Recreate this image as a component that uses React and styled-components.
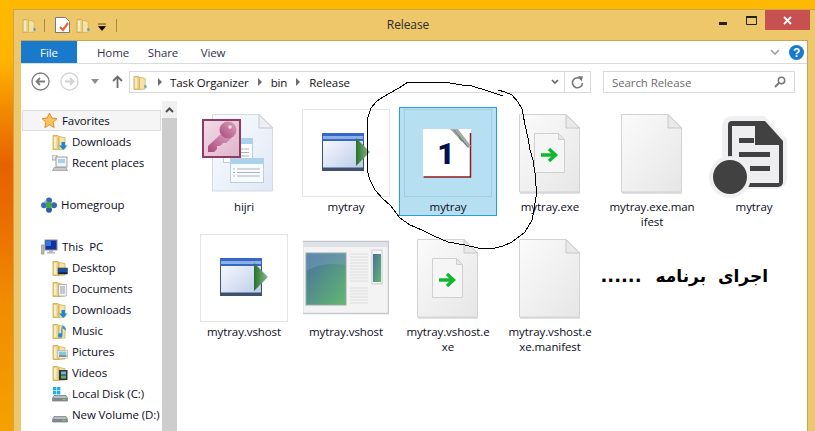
import React from "react";
import styled, { createGlobalStyle } from "styled-components";

const GlobalStyle = createGlobalStyle`
  html, body {
    margin: 0;
    width: 815px;
    height: 431px;
    overflow: hidden;
    font-family: "Open Sans", "Noto Sans", sans-serif;
    font-size: 11.5px;
    letter-spacing: -0.1px;
    color: #000;
  }
  * { box-sizing: border-box; }
  svg { display: block; flex: none; }
`;

const Desktop = styled.div`
  position: relative;
  width: 815px;
  height: 431px;
  overflow: hidden;
  padding: 9px 0 0 13px;
  background: linear-gradient(180deg, #ffb900 0, #ffb400 60px, #f28a00 110px, #e76200 165px, #ea6c00 215px, #f08c00 300px, #f5a100 431px);
`;

const Window = styled.div`
  width: 805px;
  height: 440px;
  background: #eec76a;
  border: 1px solid #c9a452;
  border-bottom: 0;
  padding: 0 7px;
  display: flex;
  flex-direction: column;
`;

const TitleBar = styled.div`
  height: 30px;
  display: grid;
  grid-template-columns: 337px 100px 1fr;
  align-items: start;
`;

const QuickAccess = styled.div`
  display: flex;
  align-items: center;
  height: 30px;
  padding-left: 1px;
`;

const QuickSep = styled.span`
  width: 1px;
  height: 13px;
  background: #a88b4a;
  margin: 0 ${(p) => p.$right}px 0 ${(p) => p.$left}px;
`;

const QuickDoc = styled.svg`
  margin-right: 6px;
`;

const Title = styled.div`
  font-size: 12px;
  line-height: 30px;
  text-align: center;
  color: #2b2b2b;
`;

const Controls = styled.div`
  display: flex;
  justify-content: flex-end;
`;

const ControlButton = styled.div`
  width: ${(p) => p.$width}px;
  height: 20px;
  display: flex;
  align-items: center;
  justify-content: center;
  background: ${(p) => p.$bg || "transparent"};
`;

const Surface = styled.div`
  flex: 1;
  min-height: 0;
  width: 787px;
  background: #fff;
  border-top: 1px solid #c9a452;
  border-right: 1px solid #c9a452;
  display: flex;
  flex-direction: column;
`;

const Ribbon = styled.div`
  height: 23px;
  display: flex;
  align-items: stretch;
  border-bottom: 1px solid #dadbdc;
`;

const RibbonTab = styled.div`
  width: ${(p) => p.$width}px;
  display: flex;
  align-items: center;
  justify-content: center;
  color: ${(p) => (p.$file ? "#fff" : "#33334a")};
  background: ${(p) => (p.$file ? "#1979ca" : "transparent")};
`;

const RibbonRight = styled.div`
  margin-left: auto;
  display: flex;
  align-items: center;
  gap: 9px;
  padding-right: 3px;
`;

const AddressRow = styled.div`
  height: 36px;
  display: flex;
  align-items: flex-start;
  padding-top: 7px;
`;

const NavButtons = styled.div`
  width: 108px;
  height: 21px;
  display: flex;
  align-items: center;
  padding-left: 10px;
`;

const NavGlyph = styled.svg`
  margin-left: ${(p) => p.$left || 0}px;
`;

const AddressBox = styled.div`
  width: 462px;
  height: 22px;
  border: 1px solid #d9d9d9;
  display: flex;
  align-items: center;
`;

const Crumbs = styled.div`
  flex: 1;
  display: flex;
  align-items: center;
  padding-left: 3px;
  color: #111;
`;

const CrumbArrow = styled.span`
  width: 0;
  height: 0;
  margin: 0 ${(p) => p.$right || 9}px 0 ${(p) => p.$left || 9}px;
  border-left: 4px solid #6d6d6d;
  border-top: 4px solid transparent;
  border-bottom: 4px solid transparent;
`;

const AddressAction = styled.div`
  width: ${(p) => p.$width}px;
  height: 100%;
  display: flex;
  align-items: center;
  justify-content: center;
  border-left: ${(p) => (p.$line ? "1px solid #d9d9d9" : "0")};
`;

const SearchBox = styled.div`
  width: 192px;
  height: 22px;
  margin-left: 12px;
  border: 1px solid #d9d9d9;
  display: flex;
  align-items: center;
  justify-content: space-between;
  padding: 0 8px;
  color: #6d6d6d;
`;

const Main = styled.div`
  flex: 1;
  min-height: 0;
  display: flex;
`;

const Sidebar = styled.nav`
  width: 141px;
  flex: none;
  padding-top: 10px;
  overflow: hidden;
`;

const NavRow = styled.div`
  height: 21px;
  margin: ${(p) => (p.$gapTop ? "21px" : "0")} 0 0 1px;
  width: 139px;
  display: flex;
  align-items: center;
  gap: 4px;
  padding-left: ${(p) => (p.$child ? 30 : 19)}px;
  white-space: pre;
  color: #0c0c22;
  background: ${(p) => (p.$active ? "#f5f5f5" : "transparent")};
  outline: ${(p) => (p.$active ? "1px solid #dedede" : "none")};
  outline-offset: -1px;
`;

const Scrollbar = styled.div`
  width: 15px;
  flex: none;
  margin-top: 1px;
  display: flex;
  flex-direction: column;
  background: #cdcdcd;
`;

const ScrollUp = styled.div`
  height: 17px;
  background: #f0f0f0;
  display: flex;
  align-items: center;
  justify-content: center;
`;

const FileGrid = styled.div`
  flex: 1;
  display: grid;
  grid-template-columns: repeat(6, 98px);
  grid-auto-rows: 125px;
  column-gap: 4px;
  align-content: start;
  align-items: start;
  padding: 7px 0 0 18px;
`;

const FileItem = styled.div`
  width: 98px;
  padding: 1px 4px 1px;
  border: 1px solid ${(p) => (p.$selected ? "#26a0da" : "transparent")};
  background: ${(p) => (p.$selected ? "#b7dff2" : "transparent")};
  display: flex;
  flex-direction: column;
  align-items: center;
`;

const Thumb = styled.div`
  width: 88px;
  height: 88px;
  border: 1px solid ${(p) => (p.$selected ? "#a3cde0" : p.$framed ? "#e4e4e4" : "transparent")};
  display: flex;
  align-items: center;
  justify-content: center;
`;

const FileName = styled.div`
  width: 86px;
  margin-top: 2px;
  line-height: 15px;
  text-align: center;
  word-break: break-all;
  color: #0b0b24;
`;

const Note = styled.div`
  grid-column: 5 / 7;
  direction: rtl;
  padding: 32px 35px 0 0;
  font-family: "DejaVu Sans", sans-serif;
  font-weight: 700;
  font-size: 17px;
  letter-spacing: 0;
  line-height: 24px;
  word-spacing: 6px;
  white-space: nowrap;
  color: #000;
`;

const NoteDots = styled.span`
  margin-right: 2px;
  font-size: 18px;
`;

const Annotation = styled.svg`
  position: absolute;
  left: 0;
  top: 0;
  pointer-events: none;
`;

/* ---------- small icons ---------- */

const FolderIcon = ({ children, size = 16 }) => (
  <svg width={size} height={size} viewBox="0 0 16 16">
    <path d="M1 1.5h5l1 1v13H1z" fill="#e9cf7f" stroke="#c9a850" strokeWidth=".8" />
    <path d="M7 2.5l6 1.2V15l-6 .5z" fill="#f6e3a3" stroke="#cfae58" strokeWidth=".8" />
    <rect x="2" y="3" width="2.5" height="11" fill="#f8edc4" />
    {children}
  </svg>
);

const TinyFolder = () => (
  <FolderIcon size={15}>
    <rect x="12" y="11" width="2.5" height="2.5" fill="#4aa3d8" />
  </FolderIcon>
);

const Star = () => (
  <svg width="17" height="17" viewBox="0 0 17 17">
    <path d="M8.5 1l2.3 5 5.2.6-3.9 3.6 1.1 5.3-4.7-2.7-4.7 2.7 1.1-5.3L1 6.6 6.2 6z" fill="#fbc35a" stroke="#e58a2a" />
  </svg>
);

const HomeGroup = () => (
  <svg width="16" height="16" viewBox="0 0 16 16">
    <circle cx="8" cy="3.4" r="3" fill="#3566b8" />
    <circle cx="3" cy="8.300" r="3" fill="#3a6cc0" />
    <circle cx="13" cy="8.300" r="3" fill="#3566b8" />
    <circle cx="8" cy="12.800" r="3" fill="#2f5aa8" />
    <circle cx="4.800" cy="4.800" r="1.600" fill="#8fa9d8" />
    <circle cx="8" cy="8" r="3.200" fill="#43a63f" />
  </svg>
);

const ThisPc = () => (
  <svg width="17" height="16" viewBox="0 0 17 16">
    <rect x="0" y="6" width="3" height="9" fill="#b9bdb9" stroke="#7f8a80" strokeWidth=".6" />
    <rect x="4" y="1" width="12" height="10" fill="#14329c" stroke="#8c9099" />
    <rect x="5" y="2" width="5" height="5" fill="#2a7adf" />
    <path d="M8 11h4v2h2v1.5H6V13h2z" fill="#b2b6ba" />
  </svg>
);

const Drive = ({ windows }) => (
  <svg width="16" height="16" viewBox="0 0 16 16">
    <path d="M2 9.5h12l1.5 2.5v3H.5v-3z" fill="#b8bdc2" stroke="#6f777d" strokeWidth=".7" />
    <rect x="1" y="12" width="14" height="3" fill="#7f878d" />
    <rect x="10.5" y="12.7" width="3" height="1.4" fill="#7ed04a" />
    {windows && (
      <g fill="#19b3ee">
        <rect x="1" y="1" width="3.4" height="3.4" />
        <rect x="5" y="1" width="3.4" height="3.4" />
        <rect x="1" y="5" width="3.4" height="3.4" />
        <rect x="5" y="5" width="3.4" height="3.4" />
      </g>
    )}
  </svg>
);

const overlays = {
  downloads: <path d="M9.5 8h3.5v3.5h2.5L11.2 16 7 11.5h2.5z" fill="#1f86d8" />,
  desktop: (
    <g>
      <rect x="6" y="8" width="9.5" height="6" fill="#1c4fa8" stroke="#444" strokeWidth=".6" />
      <rect x="6.5" y="12.5" width="8.5" height="1.2" fill="#111" />
    </g>
  ),
  documents: (
    <g>
      <rect x="6.5" y="3.5" width="8" height="11.5" fill="#f4f4f4" stroke="#9a9a9a" strokeWidth=".6" />
      <path d="M8 6h5M8 8h5M8 10h5M8 12h5" stroke="#7d8790" strokeWidth=".8" />
    </g>
  ),
  music: <path d="M10.5 2v10.5a2.2 2.2 0 1 1-1.2-2V5.5L10.5 2c1.5 2 4 3 3.5 6-.6-1.5-2-2-3-2.5z" fill="#1c8fdc" />,
  pictures: (
    <g>
      <rect x="6" y="6.5" width="9.5" height="7.5" fill="#fff" stroke="#9aa3a8" strokeWidth=".6" />
      <rect x="7" y="7.5" width="7.5" height="3.5" fill="#88c4e8" />
      <rect x="7" y="11" width="7.5" height="2" fill="#7f9a74" />
    </g>
  ),
  videos: (
    <g>
      <rect x="7" y="5" width="8.5" height="10" fill="#2a3540" />
      <rect x="9" y="6.5" width="5" height="3" fill="#6db2d8" />
      <rect x="9" y="10.5" width="5" height="3" fill="#6bae63" />
    </g>
  ),
};

const RecentIcon = () => (
  <svg width="16" height="16" viewBox="0 0 16 16">
    <rect x="0" y="0" width="5" height="5" fill="#e8e8e8" stroke="#8c8c8c" strokeWidth=".7" />
    <rect x="4" y="2" width="11" height="10" fill="#eef3f6" stroke="#8c8c8c" strokeWidth=".8" />
    <rect x="6" y="4" width="7" height="4" fill="#a8d0e8" />
    <path d="M2 12.5h12l1.5 3H.5z" fill="#c9c9c9" stroke="#8a8a8a" strokeWidth=".6" />
  </svg>
);

const navIcon = (kind) => {
  if (kind === "star") return <Star />;
  if (kind === "homegroup") return <HomeGroup />;
  if (kind === "pc") return <ThisPc />;
  if (kind === "recent") return <RecentIcon />;
  if (kind === "c") return <Drive windows />;
  if (kind === "d") return <Drive />;
  return <FolderIcon>{overlays[kind]}</FolderIcon>;
};

/* ---------- large file icons ---------- */

const Defs = () => (
  <svg width="0" height="0">
    <defs>
      <linearGradient id="paper" x1="0" y1="0" x2="1" y2="1">
        <stop offset="0" stopColor="#fbfbfb" />
        <stop offset="1" stopColor="#e6e6e6" />
      </linearGradient>
      <linearGradient id="bluePaper" x1="0" y1="0" x2="1" y2="1">
        <stop offset="0" stopColor="#fbfcff" />
        <stop offset="1" stopColor="#e0e8f6" />
      </linearGradient>
      <linearGradient id="appBody" x1="0" y1="0" x2="1" y2="1">
        <stop offset="0" stopColor="#fdfdfe" />
        <stop offset="1" stopColor="#b9c9ea" />
      </linearGradient>
      <linearGradient id="appArrow" x1="0" y1="0" x2="1" y2="0">
        <stop offset="0" stopColor="#27702a" />
        <stop offset="1" stopColor="#8dbd8b" />
      </linearGradient>
      <linearGradient id="keyFill" x1="0" y1="0" x2="1" y2="1">
        <stop offset="0" stopColor="#f2dbe6" />
        <stop offset="1" stopColor="#e0b4ca" />
      </linearGradient>
      <linearGradient id="keyBody" x1="1" y1="0" x2="0" y2="1">
        <stop offset="0" stopColor="#dda2be" />
        <stop offset="1" stopColor="#a9497c" />
      </linearGradient>
      <linearGradient id="preview" x1="0" y1="0" x2="1" y2="1">
        <stop offset="0" stopColor="#47709f" />
        <stop offset="1" stopColor="#62b86f" />
      </linearGradient>
    </defs>
  </svg>
);

const Paper = () => (
  <g>
    <path d="M13.5 5.5H60L73.5 19v64H13.5z" fill="url(#paper)" stroke="#d3d3d3" />
    <path d="M60 5.5V19h13.5z" fill="#e9e9e9" stroke="#c8c8c8" />
    <path d="M14 84h60" stroke="#c4c4c4" />
  </g>
);

const ManifestIcon = () => (
  <svg width="86" height="86" viewBox="1 1 86 86">
    <Paper />
  </svg>
);

const ExeIcon = () => (
  <svg width="86" height="86" viewBox="1 1 86 86">
    <Paper />
    <path d="M28.5 24.5h24l6 6v33h-30z" fill="#f5f5f5" stroke="#cfcfcf" />
    <path d="M52.5 24.5v6h6z" fill="#e6e6e6" stroke="#cfcfcf" />
    <path d="M35 46h14M43 40l6.5 6-6.5 6" fill="none" stroke="#0fb82e" strokeWidth="3.4" />
  </svg>
);

const AppIcon = () => (
  <svg width="86" height="86" viewBox="1 1 86 86">
    <rect x="20.5" y="24.5" width="41" height="37" fill="url(#appBody)" stroke="#3e526e" />
    <rect x="20" y="24" width="42" height="8" fill="#3567c9" />
    <rect x="21" y="27" width="40" height="3" fill="#8fb0e6" />
    <rect x="20" y="58.5" width="42" height="3.5" fill="#3e526e" />
    <path d="M54 29v28l14-14z" fill="url(#appArrow)" />
  </svg>
);

const HijriIcon = () => (
  <svg width="86" height="86" viewBox="1 1 86 86">
    <path d="M12.5 5.5H59L72.5 19v63H12.5z" fill="url(#bluePaper)" stroke="#d6d9de" />
    <path d="M59 5.5V19h13.5z" fill="#eceef2" stroke="#c8c8c8" />
    <rect x="23.5" y="29.5" width="29" height="24" fill="#fff" stroke="#b9cfe0" />
    <rect x="24" y="30" width="28" height="5" fill="#a9d2ee" />
    <path d="M34 40h15M34 43.500h15M34 47h15" stroke="#a9b4bf" />
    <rect x="30.500" y="49.500" width="33" height="24" fill="#f7fbfe" stroke="#b9cfe0" />
    <rect x="31" y="50" width="32" height="5" fill="#a9d2ee" />
    <path d="M37 60h23M37 63.500h23M37 67h23M33 60h2M33 63.500h2M33 67h2" stroke="#a9b4bf" />
    <rect x="3" y="11" width="37" height="37" fill="url(#keyFill)" stroke="#8e3b66" strokeWidth="2" />
    <path d="M21 25L8 37v6h6l3-3v-3h3l3-3h3l6-5z" fill="url(#keyBody)" />
    <circle cx="28" cy="21" r="8.500" fill="url(#keyBody)" />
    <circle cx="30" cy="18" r="1.800" fill="#f3d9e5" />
  </svg>
);

const CalendarIcon = () => (
  <svg width="86" height="86" viewBox="1 1 86 86">
    <rect x="19" y="20" width="48" height="48" fill="#fff" />
    <path d="M66.500 24v44H19.500" fill="none" stroke="#8a1c22" strokeWidth="1.500" />
    <text x="42" y="55" fontFamily="Roboto, sans-serif" fontSize="30" fontWeight="900" textAnchor="middle" fill="#00104f">1</text>
    <path d="M46 20h8l13 17-3 2z" fill="#a8abae" />
    <path d="M50 21l14 17" stroke="#6c7072" />
    <path d="M55 28l3 4" stroke="#5aa04a" strokeWidth="1.500" />
  </svg>
);

const ShortcutDocIcon = () => (
  <svg width="86" height="86" viewBox="1 1 86 86" overflow="visible">
    <path d="M22 7h32l23 23v40a10 10 0 0 1-10 10H22A10 10 0 0 1 12 70V17A10 10 0 0 1 22 7z" fill="#f0f0f2" />
    <path d="M22 12h33l18 20v41a5 5 0 0 1-5 5H22a4 4 0 0 1-4-4V16a4 4 0 0 1 4-4z" fill="#414141" />
    <path d="M22 17h23v19h24v38H22z" fill="#eeeef0" />
    <rect x="29" y="29" width="15" height="5" fill="#414141" />
    <rect x="29" y="43" width="31" height="5" fill="#414141" />
    <rect x="40" y="57" width="20" height="5" fill="#414141" />
    <circle cx="20" cy="68" r="21" fill="#f0f0f2" />
    <circle cx="20" cy="68" r="17" fill="#414141" />
  </svg>
);

const PreviewIcon = () => (
  <svg width="86" height="86" viewBox="2 1 86 86">
    <rect x="1.500" y="7.500" width="86" height="72" fill="#f3f3f3" stroke="#c4c8cc" strokeWidth="1.500" />
    <rect x="2" y="8" width="85" height="5" fill="#dfe2e5" />
    <rect x="5" y="19" width="40" height="52" fill="url(#preview)" stroke="#9ba6a8" />
    <path d="M5 37c14-8 28-8 40-6V19H5z" fill="#7d9fc0" opacity=".45" />
    <path d="M49 20h18M49 23h18M49 26h18M49 29h18M49 32h18M49 35h18M49 38h18M49 41h18M49 44h18M49 47h18M49 54h18M49 57h18M49 60h18M49 63h18M49 66h18M49 69h18" stroke="#dcdcdc" />
    <rect x="71" y="16" width="10" height="34" fill="#f8f8f8" stroke="#cccccc" />
    <rect x="72" y="20" width="8" height="28" fill="url(#preview)" />
  </svg>
);

/* ---------- data ---------- */

const navItems = [
  { label: "Favorites", icon: "star", active: true },
  { label: "Downloads", icon: "downloads", child: true },
  { label: "Recent places", icon: "recent", child: true },
  { label: "Homegroup", icon: "homegroup", gapTop: true },
  { label: "This  PC", icon: "pc", gapTop: true },
  { label: "Desktop", icon: "desktop", child: true },
  { label: "Documents", icon: "documents", child: true },
  { label: "Downloads", icon: "downloads", child: true },
  { label: "Music", icon: "music", child: true },
  { label: "Pictures", icon: "pictures", child: true },
  { label: "Videos", icon: "videos", child: true },
  { label: "Local Disk (C:)", icon: "c", child: true },
  { label: "New Volume (D:)", icon: "d", child: true },
];

const files = [
  { name: "hijri", icon: <HijriIcon /> },
  { name: "mytray", icon: <AppIcon />, framed: true },
  { name: "mytray", icon: <CalendarIcon />, selected: true },
  { name: "mytray.exe", icon: <ExeIcon /> },
  { name: "mytray.exe.manifest", icon: <ManifestIcon /> },
  { name: "mytray", icon: <ShortcutDocIcon /> },
  { name: "mytray.vshost", icon: <AppIcon />, framed: true },
  { name: "mytray.vshost", icon: <PreviewIcon /> },
  { name: "mytray.vshost.exe", icon: <ExeIcon /> },
  { name: "mytray.vshost.exe.manifest", icon: <ManifestIcon /> },
];

// the hand drawn ring round the selected file
const ring =
  "M498 90 L505 92 L512 95 L518 102 L522 109 L523 114 L525 125 L528 138 L530 150 L533 160 L535 173 L536 186 L536 197 L534 210 L532 220 L525 232 L512 242 L503 246 L495 248 L478 248 L465 245 L448 242 L434 236 L422 230 L410 225 L400 218 L390 205 L383 199 L375 190 L370 180 L368 173 L367 153 L367 120 L371 108 L377 101 L383 97 L390 93 L399 88 L408 82 L425 82 L450 83 L462 85 L472 86 L488 91 L503 96";

const App = () => (
  <Desktop>
    <GlobalStyle />
    <Defs />
    <Window>
      <TitleBar>
        <QuickAccess>
          <TinyFolder />
          <QuickSep $left={7} $right={10} />
          <QuickDoc width="15" height="16" viewBox="0 0 15 16">
            <path d="M.5.500h10l4 4v11H.5z" fill="#fff" stroke="#7a7a7a" />
            <path d="M5 10l3 3 5-7" fill="none" stroke="#e8663c" strokeWidth="2.200" />
          </QuickDoc>
          <TinyFolder />
          <svg width="20" height="16" viewBox="0 0 20 16">
            <path d="M7 7h8M7.500 9.500h7l-3.500 4z" fill="#000" stroke="#000" strokeWidth=".6" />
          </svg>
          <QuickSep $left={5} $right={0} />
        </QuickAccess>
        <Title>Release</Title>
        <Controls>
          <ControlButton $width={28}>
            <svg width="8" height="20"><rect y="12" width="8" height="3" fill="#222" /></svg>
          </ControlButton>
          <ControlButton $width={28}>
            <svg width="11" height="9"><path d="M.5.500h10v8H.5z" fill="none" stroke="#222" /><rect width="11" height="2" fill="#222" /></svg>
          </ControlButton>
          <ControlButton $width={45} $bg="#c75050">
            <svg width="9" height="9"><path d="M1 1l7 7M8 1L1 8" stroke="#fff" strokeWidth="1.800" /></svg>
          </ControlButton>
        </Controls>
      </TitleBar>
      <Surface>
        <Ribbon>
          <RibbonTab $file $width={56}>File</RibbonTab>
          <RibbonTab $width={72}>Home</RibbonTab>
          <RibbonTab $width={28}>Share</RibbonTab>
          <RibbonTab $width={72}>View</RibbonTab>
          <RibbonRight>
            <svg width="10" height="7" viewBox="0 0 10 7">
              <path d="M1 1l4 4 4-4" fill="none" stroke="#9aa0a6" strokeWidth="1.600" />
            </svg>
            <svg width="15" height="15" viewBox="0 0 15 15">
              <circle cx="7.500" cy="7.500" r="7.500" fill="#1979ca" />
              <text x="7.500" y="12" fontFamily="Liberation Sans, sans-serif" fontSize="12" fontWeight="700" textAnchor="middle" fill="#fff">?</text>
            </svg>
          </RibbonRight>
        </Ribbon>
        <AddressRow>
          <NavButtons>
            <NavGlyph width="19" height="19" viewBox="0 0 19 19">
              <circle cx="9.500" cy="9.500" r="8.500" fill="#fff" stroke="#7d7d7d" strokeWidth="1.300" />
              <path d="M14 9.500H5.500M9 6l-3.500 3.500L9 13" fill="none" stroke="#7d7d7d" strokeWidth="1.800" />
            </NavGlyph>
            <NavGlyph $left={10} width="19" height="19" viewBox="0 0 19 19">
              <circle cx="9.500" cy="9.500" r="8.500" fill="#fff" stroke="#d2d2d2" strokeWidth="1.300" />
              <path d="M5 9.500h8.500M10 6l3.500 3.500L10 13" fill="none" stroke="#d2d2d2" strokeWidth="1.800" />
            </NavGlyph>
            <NavGlyph $left={12} width="8" height="5" viewBox="0 0 8 5">
              <path d="M0 0h8L4 5z" fill="#8e8e8e" />
            </NavGlyph>
            <NavGlyph $left={13} width="11" height="13" viewBox="0 0 11 13">
              <path d="M5.500 13V2M1 6l4.500-4.500L10 6" fill="none" stroke="#6d6d6d" strokeWidth="1.800" />
            </NavGlyph>
          </NavButtons>
          <AddressBox>
            <Crumbs>
              <TinyFolder />
              <CrumbArrow $left={10} $right={8} />
              Task Organizer
              <CrumbArrow />
              bin
              <CrumbArrow />
              Release
            </Crumbs>
            <AddressAction $width={18}>
              <svg width="8" height="6" viewBox="0 0 8 6">
                <path d="M1 1l3 3 3-3" fill="none" stroke="#666" strokeWidth="1.600" />
              </svg>
            </AddressAction>
            <AddressAction $line $width={26}>
              <svg width="13" height="13" viewBox="0 0 13 13">
                <path d="M10.700 4A5 5 0 1 0 11.500 7" fill="none" stroke="#777" strokeWidth="1.600" />
                <path d="M7 0l5 .5-1.500 5z" fill="#777" />
              </svg>
            </AddressAction>
          </AddressBox>
          <SearchBox>
            Search Release
            <svg width="12" height="12" viewBox="0 0 12 12">
              <circle cx="7.500" cy="4.500" r="3.200" fill="none" stroke="#777" strokeWidth="1.500" />
              <path d="M5 7l-4 4" stroke="#777" strokeWidth="2" />
            </svg>
          </SearchBox>
        </AddressRow>
        <Main>
          <Sidebar>
            {navItems.map((item, i) => (
              <NavRow key={i} $child={item.child} $active={item.active} $gapTop={item.gapTop}>
                {navIcon(item.icon)}
                <span>{item.label}</span>
              </NavRow>
            ))}
          </Sidebar>
          <Scrollbar>
            <ScrollUp>
              <svg width="9" height="6" viewBox="0 0 9 6">
                <path d="M1 5l3.500-3.500L8 5" fill="none" stroke="#505050" strokeWidth="2" />
              </svg>
            </ScrollUp>
          </Scrollbar>
          <FileGrid>
            {files.map((file, i) => (
              <FileItem key={i} $selected={file.selected}>
                <Thumb $framed={file.framed} $selected={file.selected}>{file.icon}</Thumb>
                <FileName>{file.name}</FileName>
              </FileItem>
            ))}
            <Note>اجرای برنامه <NoteDots>......</NoteDots></Note>
          </FileGrid>
        </Main>
      </Surface>
    </Window>
    <Annotation width="815" height="431" viewBox="0 0 815 431">
      <path d={ring} fill="none" stroke="#000" strokeWidth="1" shapeRendering="crispEdges" />
    </Annotation>
  </Desktop>
);

export default App;
